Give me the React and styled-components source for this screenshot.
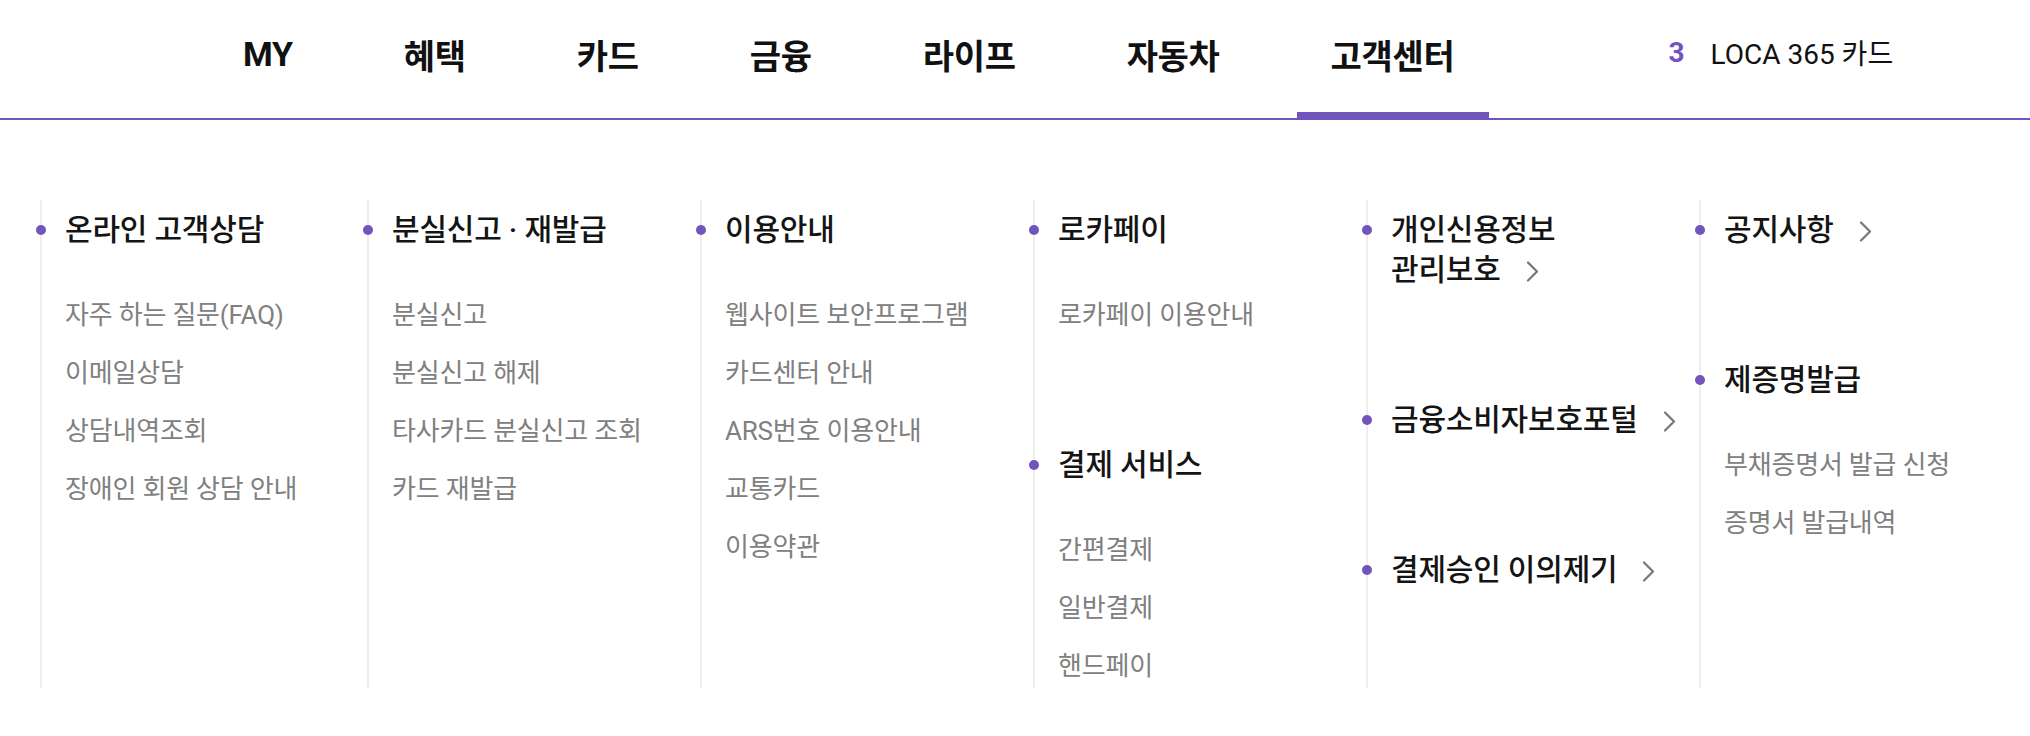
import React from "react";
import styled, { createGlobalStyle } from "styled-components";

const PURPLE = "#7254bd";

const GlobalStyle = createGlobalStyle`
  html, body {
    margin: 0;
    padding: 0;
    background: #ffffff;
  }
  body {
    width: 2030px;
    height: 736px;
    overflow: hidden;
    font-family: Roboto, "Noto Sans CJK KR", "Noto Sans", sans-serif;
    color: #111111;
  }
  * { box-sizing: border-box; }
`;

const Header = styled.header`
  display: flex;
  align-items: flex-start;
  height: 120px;
  padding-left: 209px;
  border-bottom: 2px solid ${PURPLE};
`;

const NavList = styled.nav`
  display: flex;
  gap: 43px;
`;

const NavItem = styled.a`
  display: flex;
  align-items: center;
  height: 118px;
  padding: 0 34px 4px;
  font-size: 34px;
  font-weight: 700;
  color: #111111;
  text-decoration: none;
  letter-spacing: -0.3px;
  border-bottom: 6px solid ${(p) => (p.$active ? PURPLE : "transparent")};
  white-space: nowrap;
`;

const CardInfo = styled.div`
  display: flex;
  align-items: center;
  gap: 26px;
  height: 118px;
  padding-bottom: 14px;
  margin-left: 180px;
  font-size: 28px;
  white-space: nowrap;
`;

const CardCount = styled.span`
  color: ${PURPLE};
  font-weight: 700;
`;

const CardName = styled.span`
  color: #111111;
  font-weight: 400;
`;

const Menu = styled.div`
  display: grid;
  grid-template-columns: 327px repeat(4, 333px) 1fr;
  padding: 80px 0 0 40px;
`;

const Column = styled.div`
  display: flex;
  flex-direction: column;
  gap: 110px;
  padding: 10px 0 2px 23px;
  border-left: 2px solid #eeeeee;
`;

const Group = styled.section`
  display: flex;
  flex-direction: column;
`;

const Title = styled.h3`
  position: relative;
  margin: 0;
  font-size: 30px;
  line-height: 40px;
  font-weight: 500;
  color: #141414;
  letter-spacing: -0.2px;
  white-space: nowrap;

  &::before {
    content: "";
    position: absolute;
    left: -29px;
    top: 15px;
    width: 10px;
    height: 10px;
    border-radius: 50%;
    background: ${PURPLE};
  }
`;

const Chevron = styled.svg`
  display: inline-block;
  width: 13px;
  height: 21px;
  margin-left: 25px;
  vertical-align: -2px;
`;

const Items = styled.ul`
  display: flex;
  flex-direction: column;
  gap: 18px;
  margin: 45px 0 0;
  padding: 0;
  list-style: none;
`;

const Item = styled.li`
  font-size: 26px;
  line-height: 40px;
  font-weight: 400;
  color: #808080;
  white-space: nowrap;
  letter-spacing: -0.2px;
`;

const Arrow = () => (
  <Chevron viewBox="0 0 13 21" aria-hidden="true">
    <polyline points="2,1.5 11,10.5 2,19.5" fill="none" stroke="#777777" strokeWidth="2.2" strokeLinecap="round" strokeLinejoin="round" />
  </Chevron>
);

const navItems = ["MY", "혜택", "카드", "금융", "라이프", "자동차", "고객센터"];

const columns = [
  [
    { title: ["온라인 고객상담"], items: ["자주 하는 질문(FAQ)", "이메일상담", "상담내역조회", "장애인 회원 상담 안내"] },
  ],
  [
    { title: ["분실신고 · 재발급"], items: ["분실신고", "분실신고 해제", "타사카드 분실신고 조회", "카드 재발급"] },
  ],
  [
    { title: ["이용안내"], items: ["웹사이트 보안프로그램", "카드센터 안내", "ARS번호 이용안내", "교통카드", "이용약관"] },
  ],
  [
    { title: ["로카페이"], items: ["로카페이 이용안내"] },
    { title: ["결제 서비스"], items: ["간편결제", "일반결제", "핸드페이"] },
  ],
  [
    { title: ["개인신용정보", "관리보호"], arrow: true },
    { title: ["금융소비자보호포털"], arrow: true },
    { title: ["결제승인 이의제기"], arrow: true },
  ],
  [
    { title: ["공지사항"], arrow: true },
    { title: ["제증명발급"], items: ["부채증명서 발급 신청", "증명서 발급내역"] },
  ],
];

export default function App() {
  return (
    <>
      <GlobalStyle />
      <Header>
        <NavList>
          {navItems.map((label) => (
            <NavItem key={label} $active={label === "고객센터"}>
              {label}
            </NavItem>
          ))}
        </NavList>
        <CardInfo>
          <CardCount>3</CardCount>
          <CardName>LOCA 365 카드</CardName>
        </CardInfo>
      </Header>
      <Menu>
        {columns.map((groups, ci) => (
          <Column key={ci}>
            {groups.map((g, gi) => (
              <Group key={gi}>
                <Title>
                  {g.title.map((line, li) => (
                    <React.Fragment key={li}>
                      {li > 0 && <br />}
                      {line}
                    </React.Fragment>
                  ))}
                  {g.arrow && <Arrow />}
                </Title>
                {g.items && (
                  <Items>
                    {g.items.map((it) => (
                      <Item key={it}>{it}</Item>
                    ))}
                  </Items>
                )}
              </Group>
            ))}
          </Column>
        ))}
      </Menu>
    </>
  );
}
